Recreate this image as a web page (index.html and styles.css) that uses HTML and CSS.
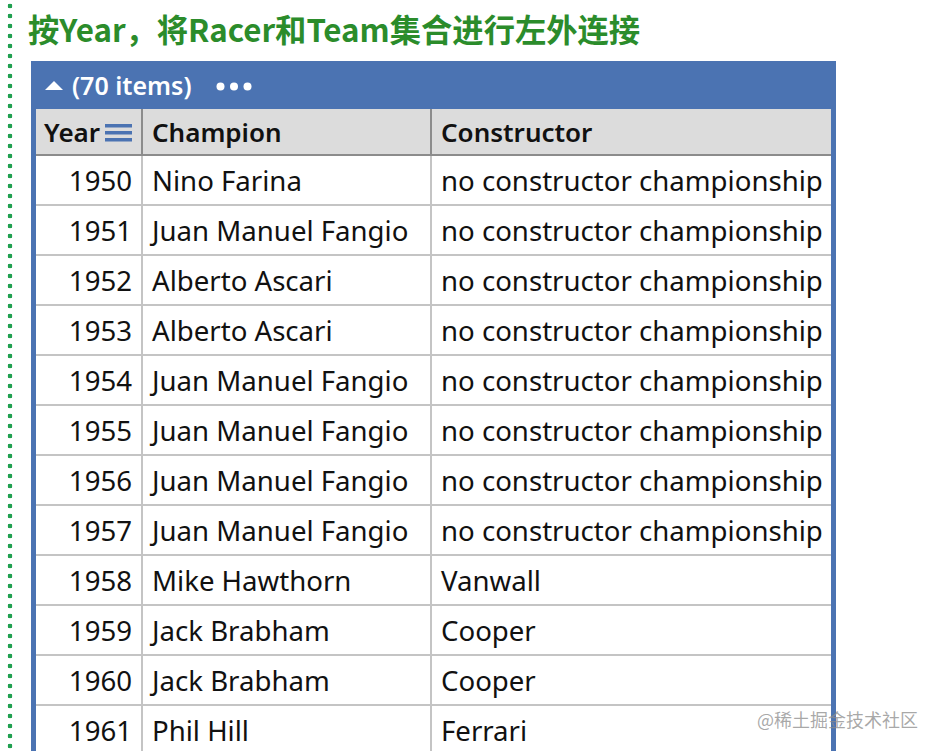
FILE: index.html
```html
<!DOCTYPE html>
<html lang="zh">
<head>
<meta charset="utf-8">
<title>Left outer join</title>
<link rel="stylesheet" href="styles.css">
</head>
<body>
<div class="page">
  <div class="rail"></div>
  <div class="content">
    <h1 class="title">按Year，将Racer和Team集合进行左外连接</h1>
    <div class="panel">
      <div class="panel-bar">
        <svg class="caret" width="18" height="9" viewBox="0 0 18 9"><polygon points="0,9 9,0 18,9" fill="#fff"/></svg>
        <span class="count">(70 items)</span>
        <svg class="more" width="36" height="9" viewBox="0 0 36 9"><circle cx="4.5" cy="4.5" r="4" fill="#fff"/><circle cx="18" cy="4.5" r="4" fill="#fff"/><circle cx="31.5" cy="4.5" r="4" fill="#fff"/></svg>
      </div>
      <div class="grid">
        <div class="hcell hyear">Year<svg class="menu" width="27" height="18" viewBox="0 0 27 18"><rect x="0" y="0" width="27" height="3.5" fill="#4b73b2"/><rect x="0" y="7" width="27" height="3.5" fill="#4b73b2"/><rect x="0" y="14" width="27" height="3.5" fill="#4b73b2"/></svg></div>
        <div class="hcell">Champion</div>
        <div class="hcell hlast">Constructor</div>

        <div class="cell year">1950</div><div class="cell">Nino Farina</div><div class="cell last">no constructor championship</div>
        <div class="cell year">1951</div><div class="cell">Juan Manuel Fangio</div><div class="cell last">no constructor championship</div>
        <div class="cell year">1952</div><div class="cell">Alberto Ascari</div><div class="cell last">no constructor championship</div>
        <div class="cell year">1953</div><div class="cell">Alberto Ascari</div><div class="cell last">no constructor championship</div>
        <div class="cell year">1954</div><div class="cell">Juan Manuel Fangio</div><div class="cell last">no constructor championship</div>
        <div class="cell year">1955</div><div class="cell">Juan Manuel Fangio</div><div class="cell last">no constructor championship</div>
        <div class="cell year">1956</div><div class="cell">Juan Manuel Fangio</div><div class="cell last">no constructor championship</div>
        <div class="cell year">1957</div><div class="cell">Juan Manuel Fangio</div><div class="cell last">no constructor championship</div>
        <div class="cell year">1958</div><div class="cell">Mike Hawthorn</div><div class="cell last">Vanwall</div>
        <div class="cell year">1959</div><div class="cell">Jack Brabham</div><div class="cell last">Cooper</div>
        <div class="cell year">1960</div><div class="cell">Jack Brabham</div><div class="cell last">Cooper</div>
        <div class="cell year">1961</div><div class="cell">Phil Hill</div><div class="cell last">Ferrari</div>
      </div>
    </div>
  </div>
</div>
<div class="watermark">@稀土掘金技术社区</div>
</body>
</html>
```

FILE: styles.css
```css
html, body {
  margin: 0;
  padding: 0;
  background: #ffffff;
  height: 751px;
  overflow: hidden;
}

body {
  font-family: "Noto Sans", "Noto Sans CJK SC", sans-serif;
  color: #111;
}

.page {
  display: flex;
  height: 751px;
}

.rail {
  width: 20px;
  flex: none;
  background-image: radial-gradient(circle at 10px 5px, #1fa050 2.1px, transparent 2.6px);
  background-size: 20px 10px;
  background-position: 0 11px;
  background-repeat: repeat-y;
}

.content {
  padding-left: 8px;
  flex: 1;
  min-width: 0;
}

.title {
  margin: 0;
  padding-top: 9px;
  height: 61px;
  box-sizing: border-box;
  font-family: "Noto Sans CJK SC", sans-serif;
  font-weight: 700;
  font-size: 31.3px;
  line-height: 40px;
  color: #2b8c2b;
  white-space: nowrap;
}

.panel {
  margin-left: 3px;
  width: 805px;
  background: #4b73b2;
  padding: 0 5px;
  box-sizing: border-box;
}

.panel-bar {
  height: 48px;
  display: flex;
  align-items: center;
  color: #fff;
  padding-left: 9px;
}

.caret {
  margin-right: 9px;
}

.count {
  font-size: 25px;
  font-weight: 600;
  line-height: 30px;
}

.more {
  margin-left: 25px;
  margin-top: 2px;
}

.grid {
  display: grid;
  grid-template-columns: 107px 289px 1fr;
  background: #fff;
}

.hcell {
  height: 47px;
  box-sizing: border-box;
  background: #dcdcdc;
  border-right: 2px solid #8c8c8c;
  border-bottom: 2px solid #8c8c8c;
  padding-left: 9px;
  font-size: 26px;
  font-weight: 600;
  display: flex;
  align-items: center;
  color: #111;
}

.hyear {
  padding-left: 8px;
}

.menu {
  margin-left: 5px;
  margin-top: 3px;
}

.hlast {
  border-right: none;
}

.cell {
  height: 50px;
  box-sizing: border-box;
  border-right: 2px solid #c4c4c4;
  border-bottom: 2px solid #c4c4c4;
  padding-left: 9px;
  font-size: 27.6px;
  display: flex;
  align-items: center;
  white-space: nowrap;
  overflow: hidden;
}

.year {
  justify-content: flex-end;
  padding-left: 0;
  padding-right: 9px;
}

.last {
  border-right: none;
}

.watermark {
  position: absolute;
  left: 757px;
  top: 706px;
  font-family: "Noto Sans CJK SC", sans-serif;
  font-size: 18px;
  line-height: 26px;
  color: rgba(140, 140, 140, 0.75);
}
```
